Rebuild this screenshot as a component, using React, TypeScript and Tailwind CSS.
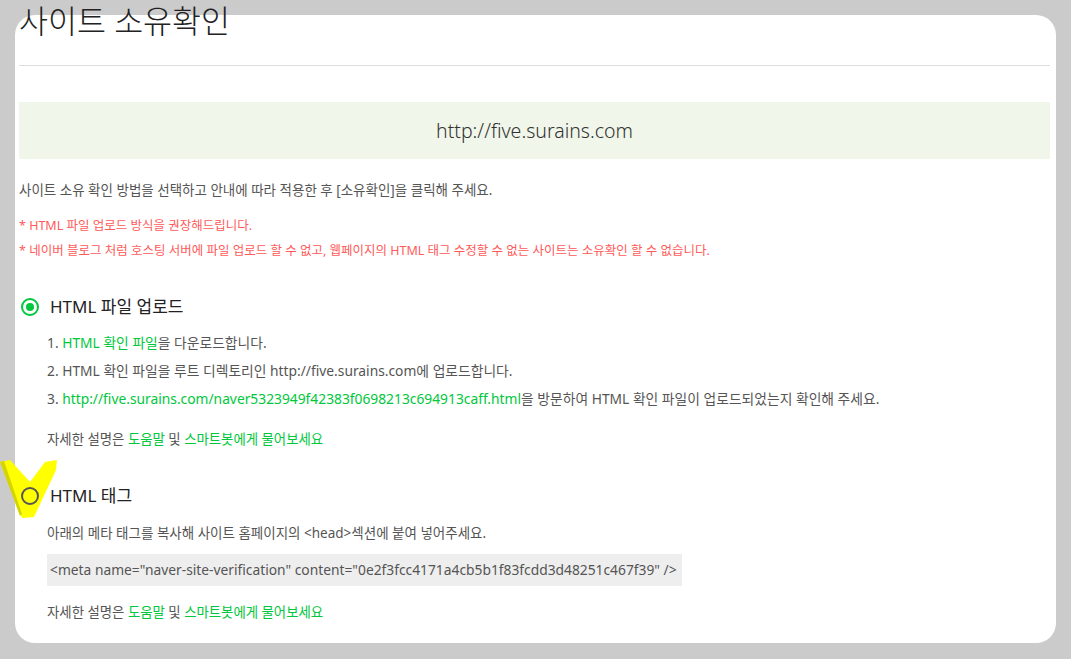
import React from "react";

const font = { fontFamily: '"Noto Sans", "Noto Sans CJK KR", sans-serif' };

function Radio({ checked }: { checked: boolean }) {
  return checked ? (
    <span className="flex h-[18px] w-[18px] items-center justify-center rounded-full border-2 border-[#00c73c]">
      <span className="h-[8px] w-[8px] rounded-full bg-[#00c73c]" />
    </span>
  ) : (
    <span className="block h-[18px] w-[18px] rounded-full border-2 border-[#555]" />
  );
}

function Help() {
  return (
    <p className="h-[20px] text-[13.4px] leading-[20px] text-[#555]">
      자세한 설명은 <span className="text-[#00c73c]">도움말</span> 및{" "}
      <span className="text-[#00c73c]">스마트봇에게 물어보세요</span>
    </p>
  );
}

export default function App() {
  return (
    <div className="h-[659px] w-[1071px] overflow-hidden bg-[#cbcbcb] pl-[15px] pt-[15px]" style={font}>
      <div className="relative isolate flow-root h-[628px] w-[1041px] rounded-[20px] bg-white pl-[4px] pr-[6px]">
        <h1 className="-mt-[12px] h-[36px] text-[31.5px] font-light leading-[36px] text-[#222]">사이트 소유확인</h1>
        <div className="mt-[26px] border-t border-[#dddddd]" />

        <div className="mt-[36px] flex h-[57px] items-center justify-center bg-[#f0f6e9] text-[19.5px] font-light text-[#333]">
          http://five.surains.com
        </div>

        <p className="mt-[21px] text-[13.5px] leading-[20px] text-[#555]">
          사이트 소유 확인 방법을 선택하고 안내에 따라 적용한 후 [소유확인]을 클릭해 주세요.
        </p>
        <p className="mt-[16px] text-[12.5px] leading-[20px] text-[#ff5a5a]">* HTML 파일 업로드 방식을 권장해드립니다.</p>
        <p className="mt-[5px] text-[12.5px] leading-[20px] text-[#ff5a5a]">
          * 네이버 블로그 처럼 호스팅 서버에 파일 업로드 할 수 없고, 웹페이지의 HTML 태그 수정할 수 없는 사이트는 소유확인 할 수 없습니다.
        </p>

        <div className="mt-[34px] flex h-[24px] items-center gap-[11px] pl-[2px]">
          <Radio checked />
          <span className="text-[17px] text-[#222]">HTML 파일 업로드</span>
        </div>
        <ol className="mt-[10px] pl-[28px] text-[13.8px] leading-[28px] text-[#555]">
          <li>
            1. <span className="text-[#00c73c]">HTML 확인 파일</span>을 다운로드합니다.
          </li>
          <li>2. HTML 확인 파일을 루트 디렉토리인 http://five.surains.com에 업로드합니다.</li>
          <li>
            3. <span className="text-[#00c73c]">http://five.surains.com/naver5323949f42383f0698213c694913caff.html</span>을 방문하여 HTML
            확인 파일이 업로드되었는지 확인해 주세요.
          </li>
        </ol>
        <div className="mt-[16px] pl-[28px]">
          <Help />
        </div>

        <div className="mt-[35px] flex h-[24px] items-center gap-[11px] pl-[2px]">
          <Radio checked={false} />
          <span className="text-[17px] text-[#222]">HTML 태그</span>
        </div>
        <div className="pl-[28px]">
          <p className="mt-[15px] text-[13.5px] leading-[20px] text-[#555]">
            아래의 메타 태그를 복사해 사이트 홈페이지의 &lt;head&gt;섹션에 붙여 넣어주세요.
          </p>
          <div className="mt-[11px] flex h-[32px] w-[635px] items-center bg-[#eeeeee] px-[3px] text-[13.8px] text-[#555]">
            &lt;meta name="naver-site-verification" content="0e2f3fcc4171a4cb5b1f83fcdd3d48251c467f39" /&gt;
          </div>
          <div className="mt-[16px]">
            <Help />
          </div>
        </div>

        {/* highlighter mark over the second option */}
        <svg className="absolute -z-10 left-[-15px] top-[445px]" width="60" height="60" viewBox="0 0 60 60" aria-hidden>
          <polygon points="0,2 10,0 30,22 45,2 57,0 56,10 34,57 22,58" fill="#ffff00" />
          <polygon points="0,2 4,1 22,54 20,56" fill="#d4d400" />
        </svg>
      </div>
    </div>
  );
}
